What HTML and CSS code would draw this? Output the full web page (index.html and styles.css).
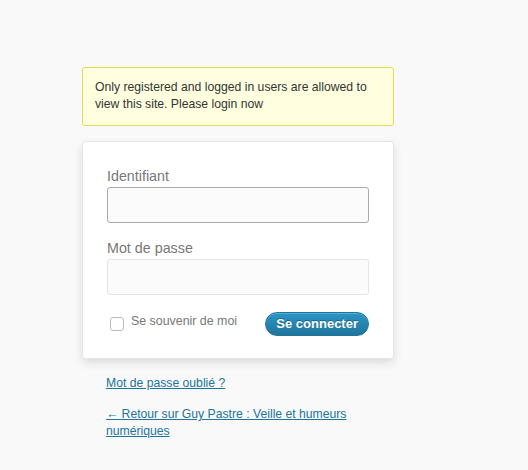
FILE: index.html
```html
<!doctype html>
<html lang="fr">
<head>
  <meta charset="UTF-8">
  <title>Connexion</title>
  <link rel="stylesheet" href="styles.css">
</head>
<body class="login">
  <div id="login">
    <p class="message">Only registered and logged in users are allowed to view this site. Please login now</p>

    <form id="loginform">
      <p class="field">
        <label for="user_login">Identifiant</label>
        <input type="text" id="user_login" class="input focus">
      </p>
      <p class="field">
        <label for="user_pass">Mot de passe</label>
        <input type="password" id="user_pass" class="input">
      </p>
      <div class="actions">
        <label class="forgetmenot"><span class="box"></span>Se souvenir de moi</label>
        <button type="button" class="button-primary">Se connecter</button>
      </div>
    </form>

    <p id="nav"><a href="#">Mot de passe oublié ?</a></p>
    <p id="backtoblog"><a href="#">&larr; Retour sur Guy Pastre : Veille et humeurs numériques</a></p>
  </div>
</body>
</html>
```

FILE: styles.css
```css
html, body{
  margin:0;
  padding:0;
}
body.login {
  background: #f9f9f9;
  font-family: "Liberation Sans", Arial, sans-serif;
  font-size: 12.2px;
  color: #333;
  height: 470px;
}
#login {
  width: 312px;
  padding: 67px 0 0 82px;
}
.message {
  margin: 0;
  padding: 11px 12px 12px;
  background: #ffffe0;
  border: 1px solid #e6db55;
  border-radius: 3px;
  line-height: 17px;
}
#loginform {
  margin-top: 15px;
  padding: 26px 24px 22px;
  background: #fff;
  border: 1px solid #e5e5e5;
  border-radius: 3px;
  box-shadow: rgba(200,200,200,0.7) 0 4px 10px -1px;
}
.field {
  margin: 0 0 17px;
}
.field label {
  display: block;
  color: #777;
  font-size: 14.3px;
  line-height: 17px;
}
.input {
  display: block;
  box-sizing: border-box;
  width: 100%;
  height: 36px;
  margin-top: 2px;
  padding: 3px;
  font-size: 24px;
  background: #fbfbfb;
  border: 1px solid #e5e5e5;
  border-radius: 3px;
  outline: none;
}
.input.focus {
  border-color: #aaa;
}
.actions {
  display: flex;
  justify-content: space-between;
  align-items: flex-start;
  margin-top: -17px;
  padding-top: 17px;
}
.forgetmenot {
  display: flex;
  align-items: flex-start;
  color: #777;
  font-size: 12.4px;
  line-height: 17px;
  padding-top: 1px;
}
.box {
  display: inline-block;
  width: 12px;
  height: 12px;
  margin: 4px 7px 0 3px;
  border: 1px solid #bbb;
  border-radius: 3px;
  background: #fff;
}
.button-primary {
  height: 24px;
  padding: 0 10px 1px;
  border: 1px solid #21759b;
  border-radius: 12px;
  background: linear-gradient(to bottom, #2a95c5, #21759b);
  box-shadow: inset 0 1px 0 rgba(120,200,230,0.5);
  color: #fff;
  font-family: "Liberation Sans", Arial, sans-serif;
  font-size: 13px;
  font-weight: bold;
  text-shadow: 0 -1px 0 rgba(0,0,0,0.3);
}
#nav, #backtoblog {
  margin: 0;
  padding: 0 0 0 24px;
  line-height: 17px;
}
#nav {
  margin-top: 16px;
}
#backtoblog {
  margin-top: 14px;
}
#login a {
  color: #21759b;
}
```
